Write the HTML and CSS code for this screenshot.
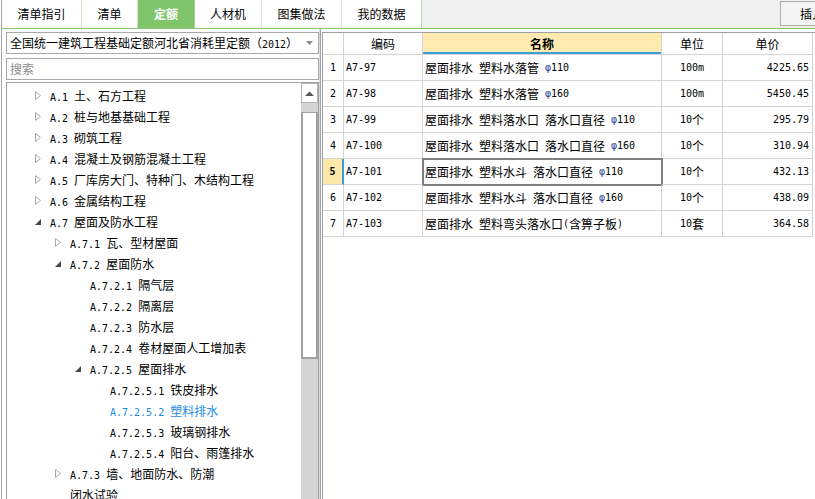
FILE: index.html
```html
<!DOCTYPE html>
<html lang="zh">
<head>
<meta charset="utf-8">
<title>定额</title>
<link rel="stylesheet" href="styles.css">
</head>
<body>
<div class="app">
  <div class="tabbar">
    <div class="tab t1">清单指引</div>
    <div class="tab t2">清单</div>
    <div class="tab t3 on">定额</div>
    <div class="tab t4">人材机</div>
    <div class="tab t5">图集做法</div>
    <div class="tab t6">我的数据</div>
    <div class="tab-fill"><div class="btn">插入</div></div>
  </div>
  <div class="main">
    <aside class="left">
      <div class="select">
        <span>全国统一建筑工程基础定额河北省消耗里定额（<span class="m">2012</span>）</span>
        <svg class="caret" width="7" height="4" viewBox="0 0 7 4"><path d="M0 0H7L3.5 4Z" fill="#8a8a8a"/></svg>
      </div>
      <div class="search">搜索</div>
      <div class="tree">
        <ul class="nodes">
          <li class="n l1"><span class="tg"><svg width="6" height="9" viewBox="0 0 6 9"><path d="M0.5 0.5L5.5 4.5L0.5 8.5Z" fill="#fff" stroke="#a8a8a8"/></svg></span><span class="lb"><span class="m">A.1 </span>土、石方工程</span></li>
          <li class="n l1"><span class="tg"><svg width="6" height="9" viewBox="0 0 6 9"><path d="M0.5 0.5L5.5 4.5L0.5 8.5Z" fill="#fff" stroke="#a8a8a8"/></svg></span><span class="lb"><span class="m">A.2 </span>桩与地基基础工程</span></li>
          <li class="n l1"><span class="tg"><svg width="6" height="9" viewBox="0 0 6 9"><path d="M0.5 0.5L5.5 4.5L0.5 8.5Z" fill="#fff" stroke="#a8a8a8"/></svg></span><span class="lb"><span class="m">A.3 </span>砌筑工程</span></li>
          <li class="n l1"><span class="tg"><svg width="6" height="9" viewBox="0 0 6 9"><path d="M0.5 0.5L5.5 4.5L0.5 8.5Z" fill="#fff" stroke="#a8a8a8"/></svg></span><span class="lb"><span class="m">A.4 </span>混凝土及钢筋混凝土工程</span></li>
          <li class="n l1"><span class="tg"><svg width="6" height="9" viewBox="0 0 6 9"><path d="M0.5 0.5L5.5 4.5L0.5 8.5Z" fill="#fff" stroke="#a8a8a8"/></svg></span><span class="lb"><span class="m">A.5 </span>厂库房大门、特种门、木结构工程</span></li>
          <li class="n l1"><span class="tg"><svg width="6" height="9" viewBox="0 0 6 9"><path d="M0.5 0.5L5.5 4.5L0.5 8.5Z" fill="#fff" stroke="#a8a8a8"/></svg></span><span class="lb"><span class="m">A.6 </span>金属结构工程</span></li>
          <li class="n l1"><span class="tg"><svg width="6" height="6" viewBox="0 0 6 6"><path d="M6 0V6H0Z" fill="#474747"/></svg></span><span class="lb"><span class="m">A.7 </span>屋面及防水工程</span></li>
          <li class="n l2"><span class="tg"><svg width="6" height="9" viewBox="0 0 6 9"><path d="M0.5 0.5L5.5 4.5L0.5 8.5Z" fill="#fff" stroke="#a8a8a8"/></svg></span><span class="lb"><span class="m">A.7.1 </span>瓦、型材屋面</span></li>
          <li class="n l2"><span class="tg"><svg width="6" height="6" viewBox="0 0 6 6"><path d="M6 0V6H0Z" fill="#474747"/></svg></span><span class="lb"><span class="m">A.7.2 </span>屋面防水</span></li>
          <li class="n l3"><span class="tg"></span><span class="lb"><span class="m">A.7.2.1 </span>隔气层</span></li>
          <li class="n l3"><span class="tg"></span><span class="lb"><span class="m">A.7.2.2 </span>隔离层</span></li>
          <li class="n l3"><span class="tg"></span><span class="lb"><span class="m">A.7.2.3 </span>防水层</span></li>
          <li class="n l3"><span class="tg"></span><span class="lb"><span class="m">A.7.2.4 </span>卷材屋面人工增加表</span></li>
          <li class="n l3"><span class="tg"><svg width="6" height="6" viewBox="0 0 6 6"><path d="M6 0V6H0Z" fill="#474747"/></svg></span><span class="lb"><span class="m">A.7.2.5 </span>屋面排水</span></li>
          <li class="n l4"><span class="tg"></span><span class="lb"><span class="m">A.7.2.5.1 </span>铁皮排水</span></li>
          <li class="n l4 sel"><span class="tg"></span><span class="lb"><span class="m">A.7.2.5.2 </span>塑料排水</span></li>
          <li class="n l4"><span class="tg"></span><span class="lb"><span class="m">A.7.2.5.3 </span>玻璃钢排水</span></li>
          <li class="n l4"><span class="tg"></span><span class="lb"><span class="m">A.7.2.5.4 </span>阳台、雨篷排水</span></li>
          <li class="n l2"><span class="tg"><svg width="6" height="9" viewBox="0 0 6 9"><path d="M0.5 0.5L5.5 4.5L0.5 8.5Z" fill="#fff" stroke="#a8a8a8"/></svg></span><span class="lb"><span class="m">A.7.3 </span>墙、地面防水、防潮<br>闭水试验</span></li>
        </ul>
        <div class="vscroll">
          <div class="sb-up"><svg width="9" height="5" viewBox="0 0 9 5"><path d="M0 5L4.5 0.5L9 5Z" fill="#555"/></svg></div>
          <div class="sb-thumb"></div>
        </div>
      </div>
    </aside>
    <section class="right">
      <div class="frame">
        <div class="gw">
          <div class="grid">
            <div class="hd"></div>
            <div class="hd c">编码</div>
            <div class="hd c hname">名称</div>
            <div class="hd c">单位</div>
            <div class="hd c">单价</div>

            <div class="num"><span class="m">1</span></div>
            <div class="code"><span class="m">A7-97</span></div>
            <div class="name">屋面排水&ensp;塑料水落管&ensp;<span class="m"><span class="phi">φ</span>110</span></div>
            <div class="c"><span class="m">100m</span></div>
            <div class="price"><span class="m">4225.65</span></div>

            <div class="num"><span class="m">2</span></div>
            <div class="code"><span class="m">A7-98</span></div>
            <div class="name">屋面排水&ensp;塑料水落管&ensp;<span class="m"><span class="phi">φ</span>160</span></div>
            <div class="c"><span class="m">100m</span></div>
            <div class="price"><span class="m">5450.45</span></div>

            <div class="num"><span class="m">3</span></div>
            <div class="code"><span class="m">A7-99</span></div>
            <div class="name">屋面排水&ensp;塑料落水口&ensp;落水口直径&ensp;<span class="m"><span class="phi">φ</span>110</span></div>
            <div class="c"><span class="m">10</span>个</div>
            <div class="price"><span class="m">295.79</span></div>

            <div class="num"><span class="m">4</span></div>
            <div class="code"><span class="m">A7-100</span></div>
            <div class="name">屋面排水&ensp;塑料落水口&ensp;落水口直径&ensp;<span class="m"><span class="phi">φ</span>160</span></div>
            <div class="c"><span class="m">10</span>个</div>
            <div class="price"><span class="m">310.94</span></div>

            <div class="num cur"><span class="m">5</span></div>
            <div class="code"><span class="m">A7-101</span></div>
            <div class="name focus">屋面排水&ensp;塑料水斗&ensp;落水口直径&ensp;<span class="m"><span class="phi">φ</span>110</span></div>
            <div class="c"><span class="m">10</span>个</div>
            <div class="price"><span class="m">432.13</span></div>

            <div class="num"><span class="m">6</span></div>
            <div class="code"><span class="m">A7-102</span></div>
            <div class="name">屋面排水&ensp;塑料水斗&ensp;落水口直径&ensp;<span class="m"><span class="phi">φ</span>160</span></div>
            <div class="c"><span class="m">10</span>个</div>
            <div class="price"><span class="m">438.09</span></div>

            <div class="num"><span class="m">7</span></div>
            <div class="code"><span class="m">A7-103</span></div>
            <div class="name">屋面排水&ensp;塑料弯头落水口<span class="m">(</span>含箅子板<span class="m">)</span></div>
            <div class="c"><span class="m">10</span>套</div>
            <div class="price"><span class="m">364.58</span></div>
          </div>
        </div>
      </div>
    </section>
  </div>
</div>
</body>
</html>
```

FILE: styles.css
```css
html, body {
  margin: 0;
  padding: 0;
}
body {
  width: 815px;
  height: 499px;
  overflow: hidden;
  background: #fff;
  color: #000;
  font-family: "Noto Sans CJK SC", "Liberation Sans", sans-serif;
  font-size: 12px;
  line-height: 16px;
}
.m {
  font-family: "DejaVu Sans Mono", "Liberation Mono", monospace;
  font-size: 10px;
  line-height: 10px;
  white-space: pre;
}
.app {
  height: 499px;
  margin-left: 1px;
  border-left: 1px solid #a5a5a5;
  display: flex;
  flex-direction: column;
}

/* tab bar */
.tabbar {
  display: flex;
  height: 28px;
  flex-shrink: 0;
  border-bottom: 1px solid #84c96f;
}
.tab {
  box-sizing: border-box;
  height: 28px;
  border-right: 1px solid #d3e6cb;
  background: #fff;
  display: flex;
  align-items: center;
  justify-content: center;
  flex-shrink: 0;
}
.t1 { width: 80px; }
.t2 { width: 56px; }
.t3 { width: 57px; }
.t4 { width: 67px; }
.t5 { width: 80px; }
.t6 { width: 80px; border-right-color: #b7deaa; }
.tab.on {
  background: #80c46b;
  color: #fff;
  font-weight: bold;
  border-right-color: #a6d596;
}
.tab-fill {
  flex: 1;
  background: #f0f0f0;
  display: flex;
  justify-content: flex-end;
  align-items: flex-start;
  overflow: hidden;
}
.btn {
  flex-shrink: 0;
  margin-top: 1px;
  margin-right: -21px;
  width: 56px;
  height: 25px;
  box-sizing: border-box;
  border: 1px solid #adadad;
  background: #f3f3f3;
  padding-left: 19px;
  line-height: 23px;
}

/* main */
.main {
  flex: 1;
  display: flex;
  min-height: 0;
}
.left {
  width: 317px;
  flex-shrink: 0;
  box-sizing: border-box;
  padding: 3px 0 0 4px;
  display: flex;
  flex-direction: column;
}
.select {
  height: 22px;
  box-sizing: border-box;
  border: 1px solid #a9a9a9;
  padding-left: 3px;
  display: flex;
  align-items: center;
  white-space: nowrap;
}
.caret {
  margin-left: auto;
  margin-right: 5px;
}
.search {
  margin-top: 4px;
  height: 22px;
  box-sizing: border-box;
  border: 1px solid #a9a9a9;
  padding-left: 3px;
  line-height: 20px;
  color: #8c8c8c;
}
.tree {
  margin-top: 2px;
  flex: 1;
  min-height: 0;
  border: 1px solid #a0a0a0;
  border-bottom: none;
  display: flex;
}
.nodes {
  flex: 1;
  list-style: none;
  margin: 0;
  padding: 2px 0 0 0;
  overflow: hidden;
}
.n {
  display: flex;
  align-items: flex-start;
  line-height: 21px;
  white-space: nowrap;
}
.lb {
  line-height: 21px;
}
.tg {
  width: 15px;
  height: 21px;
  flex-shrink: 0;
  display: flex;
  align-items: center;
}
.l1 { padding-left: 28px; }
.l2 { padding-left: 48px; }
.l3 { padding-left: 68px; }
.l4 { padding-left: 88px; }
.sel { color: #1a8ae6; }

.vscroll {
  width: 17px;
  flex-shrink: 0;
  background: #d4d4d4;
  display: flex;
  flex-direction: column;
}
.sb-up {
  height: 20px;
  box-sizing: border-box;
  background: #fff;
  border: 1px solid #b4b4b4;
  display: flex;
  align-items: center;
  justify-content: center;
}
.sb-thumb {
  margin-top: 9px;
  height: 247px;
  box-sizing: border-box;
  background: #fff;
  border: 2px solid #a0a0a0;
  border-top-width: 1px;
}

/* right grid */
.right {
  flex: 1;
  display: flex;
  border-left: 1px solid #d3dbe6;
}
.frame {
  flex: 1;
  display: flex;
  border-left: 1px solid #97a3b6;
  padding-left: 1px;
}
.gw {
  flex: 1;
  margin-top: 3px;
  border-left: 1px solid #a0a0a0;
  border-top: 1px solid #a0a0a0;
}
.grid {
  display: grid;
  grid-template-columns: 21px 79px 239px 61px 90px;
  grid-template-rows: 22px repeat(7, 26px);
  width: 490px;
}
.grid > div {
  box-sizing: border-box;
  border-right: 1px solid #d4d4d4;
  border-bottom: 1px solid #d4d4d4;
  display: flex;
  align-items: center;
  white-space: nowrap;
  overflow: hidden;
}
.grid > .c { justify-content: center; }
.grid > .hname {
  background: #ffeab0;
  font-weight: bold;
  box-shadow: inset 0 -2px 0 #3a9fd6;
}
.grid > .num { justify-content: center; }
.grid > .num.cur {
  background: #fde8ab;
  font-weight: bold;
  border-right: 2px solid #3a9fd6;
}
.grid > .code { padding-left: 2px; }
.grid > .name { padding-left: 2px; overflow: visible; }
.grid > .name.focus {
  outline: 2px solid #7f7f7f;
  outline-offset: -1px;
}
.grid > .price {
  justify-content: flex-end;
  padding-right: 3px;
}
.phi { color: #2a3f9c; }
```
